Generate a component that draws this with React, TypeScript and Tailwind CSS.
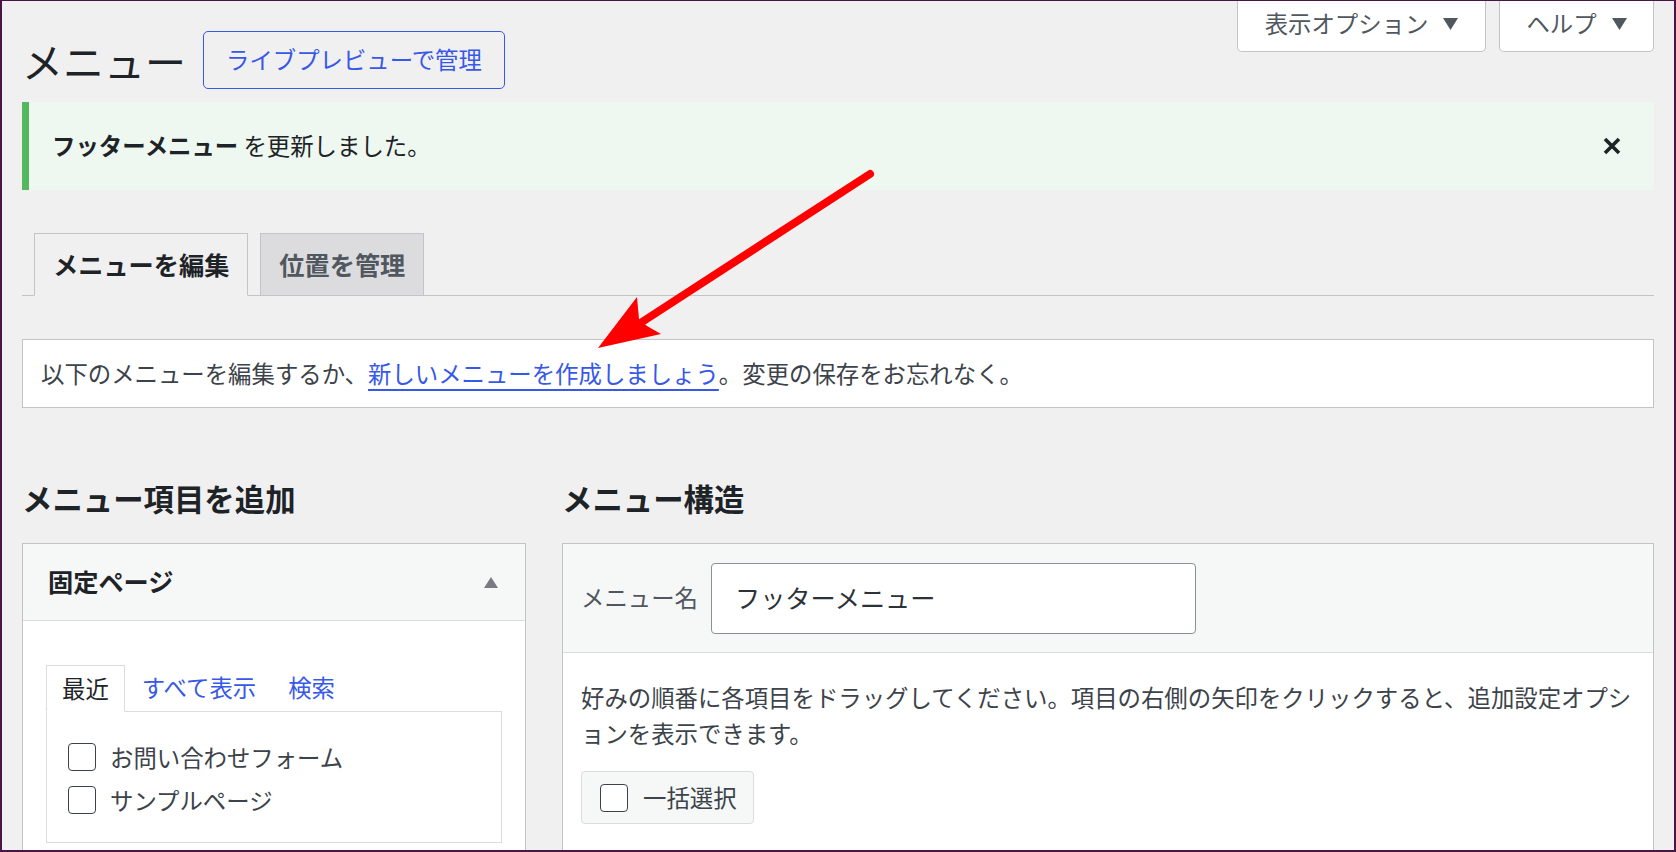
import React from 'react';

const Checkbox = () => (
  <span className="block w-[28px] h-[28px] shrink-0 rounded-[4px] border-[1.5px] border-[#3c434a] bg-white" />
);

const Caret = () => (
  <svg width="15" height="12" viewBox="0 0 15 12" className="shrink-0">
    <polygon points="0,0 15,0 7.5,12" fill="#50575e" />
  </svg>
);

const App = () => {
  return <div lang="ja" className="relative w-[1676px] h-[852px] overflow-hidden bg-[#f0f0f1] border-t border-l-2 border-r-2 border-b-2 border-[#4a1446] px-5 text-[#3c434a] font-['Noto_Sans_CJK_JP','Noto_Sans',sans-serif]">
      {/* title row + screen meta links */}
      <div className="flex justify-between items-start">
        <div className="flex items-center pt-[30px]">
          <h1 className="text-[41px] leading-[58px] text-[#1d2327]">メニュー</h1>
          <a className="ml-[17px] h-[58px] px-[22px] flex items-center border border-[#3858e9] rounded-[5px] text-[23.4px] leading-none text-[#3858e9]">
            ライブプレビューで管理
          </a>
        </div>
        <div className="flex gap-[13px]">
          <button className="h-[51px] w-[249px] pb-1 flex items-center justify-center gap-[15px] bg-white border border-t-0 border-[#c3c4c7] rounded-b-[5px] text-[23.4px] leading-none text-[#50575e]">
            表示オプション
            <Caret />
          </button>
          <button className="h-[51px] w-[155px] pb-1 flex items-center justify-center gap-[15px] bg-white border border-t-0 border-[#c3c4c7] rounded-b-[5px] text-[23.4px] leading-none text-[#50575e]">
            ヘルプ
            <Caret />
          </button>
        </div>
      </div>

      {/* success notice */}
      <div className="mt-[13px] h-[88px] flex items-center justify-between bg-[#eef8f0] border-l-[7px] border-[#55b85f] pl-[23px] pr-[33px] text-[23.4px] text-[#1d2327]">
        <p>
          <strong className="font-bold">フッターメニュー</strong> を更新しました。
        </p>
        <svg width="18" height="18" viewBox="0 0 18 18">
          <path d="M2 2 L16 16 M16 2 L2 16" stroke="#1d2327" strokeWidth="3.6" />
        </svg>
      </div>

      {/* nav tabs */}
      <div className="mt-[43px] flex items-end gap-[12px] pl-[12px] border-b border-[#c3c4c7]">
        <div className="h-[63px] -mb-px px-[18px] flex items-center border border-[#c3c4c7] border-b-[#f0f0f1] bg-[#f0f0f1] text-[25.2px] font-bold text-[#1d2327]">
          メニューを編集
        </div>
        <div className="h-[63px] -mb-px px-[18px] flex items-center border border-[#c3c4c7] bg-[#dcdcde] text-[25.2px] font-bold text-[#50575e]">
          位置を管理
        </div>
      </div>

      {/* manage menus */}
      <div className="mt-[43px] h-[69px] flex items-center bg-white border border-[#c3c4c7] pl-[18px] text-[23.4px]">
        以下のメニューを編集するか、<a className="text-[#3858e9] underline decoration-2 underline-offset-[6px]">新しいメニューを作成しましょう</a>。変更の保存をお忘れなく。
      </div>

      <div className="mt-[70px] flex items-start gap-[36px]">
        {/* add menu items */}
        <div className="w-[504px] shrink-0">
          <h2 className="text-[30.4px] leading-[40px] font-bold text-[#1d2327] mb-[25px]">メニュー項目を追加</h2>
          <div className="bg-white border border-[#c3c4c7]">
            <div className="h-[77px] flex items-center justify-between pl-[25px] pr-[27px] bg-[#f6f7f7] border-b border-[#dcdcde]">
              <h3 className="text-[25.2px] font-bold text-[#1d2327]">固定ページ</h3>
              <svg width="14" height="11" viewBox="0 0 14 11">
                <polygon points="7,0 14,11 0,11" fill="#787c82" />
              </svg>
            </div>
            <div className="pt-[44px] px-[23px] pb-[30px]">
              <div className="flex items-end text-[23.4px]">
                <div className="relative z-[1] h-[47px] -mb-px px-[15px] flex items-center border border-[#dcdcde] border-b-white bg-white text-[#1d2327]">最近</div>
                <a className="ml-[17px] h-[46px] flex items-center text-[#3858e9]">すべて表示</a>
                <a className="ml-[32px] h-[46px] flex items-center text-[#3858e9]">検索</a>
              </div>
              <ul className="h-[132px] border border-[#dcdcde] pt-[31px] pl-[21px] flex flex-col gap-[15px]">
                {['お問い合わせフォーム', 'サンプルページ'].map(item => <li key={item} className="flex items-center gap-[14px] text-[23.4px] leading-[28px]">
                    <Checkbox />
                    {item}
                  </li>)}
              </ul>
            </div>
          </div>
        </div>

        {/* menu structure */}
        <div className="flex-1">
          <h2 className="text-[30.4px] leading-[40px] font-bold text-[#1d2327] mb-[25px]">メニュー構造</h2>
          <div className="bg-white border border-[#c3c4c7]">
            <div className="h-[109px] flex items-center gap-[13px] pl-[18px] bg-[#f6f7f7] border-b border-[#dcdcde]">
              <label className="text-[23.4px] text-[#50575e]">メニュー名</label>
              <div className="w-[485px] h-[71px] flex items-center pl-[23px] bg-white border border-[#8c8f94] rounded-[4px] text-[25.2px] text-[#2c3338]">
                フッターメニュー
              </div>
            </div>
            <div className="pt-[26px] pl-[18px] pr-[10px] pb-[40px]">
              <p className="text-[23.4px] leading-[36px]">
                好みの順番に各項目をドラッグしてください。項目の右側の矢印をクリックすると、追加設定オプシ<br />ョンを表示できます。
              </p>
              <div className="mt-[20px] w-[173px] h-[53px] flex items-center gap-[15px] pl-[18px] bg-[#f6f7f7] border border-[#dcdcde] rounded-[4px] text-[23.4px]">
                <Checkbox />
                一括選択
              </div>
            </div>
          </div>
        </div>
      </div>

      {/* annotation arrow */}
      <svg className="absolute -top-px -left-[2px] w-[1676px] h-[852px] pointer-events-none" viewBox="0 0 1676 852">
        <line x1="870" y1="174" x2="642" y2="322" stroke="#ff0000" strokeWidth="8" strokeLinecap="round" />
        <polygon points="598,348 637,297 639,319 647,326 661,334" fill="#ff0000" />
      </svg>
    </div>;
};
export default App;
